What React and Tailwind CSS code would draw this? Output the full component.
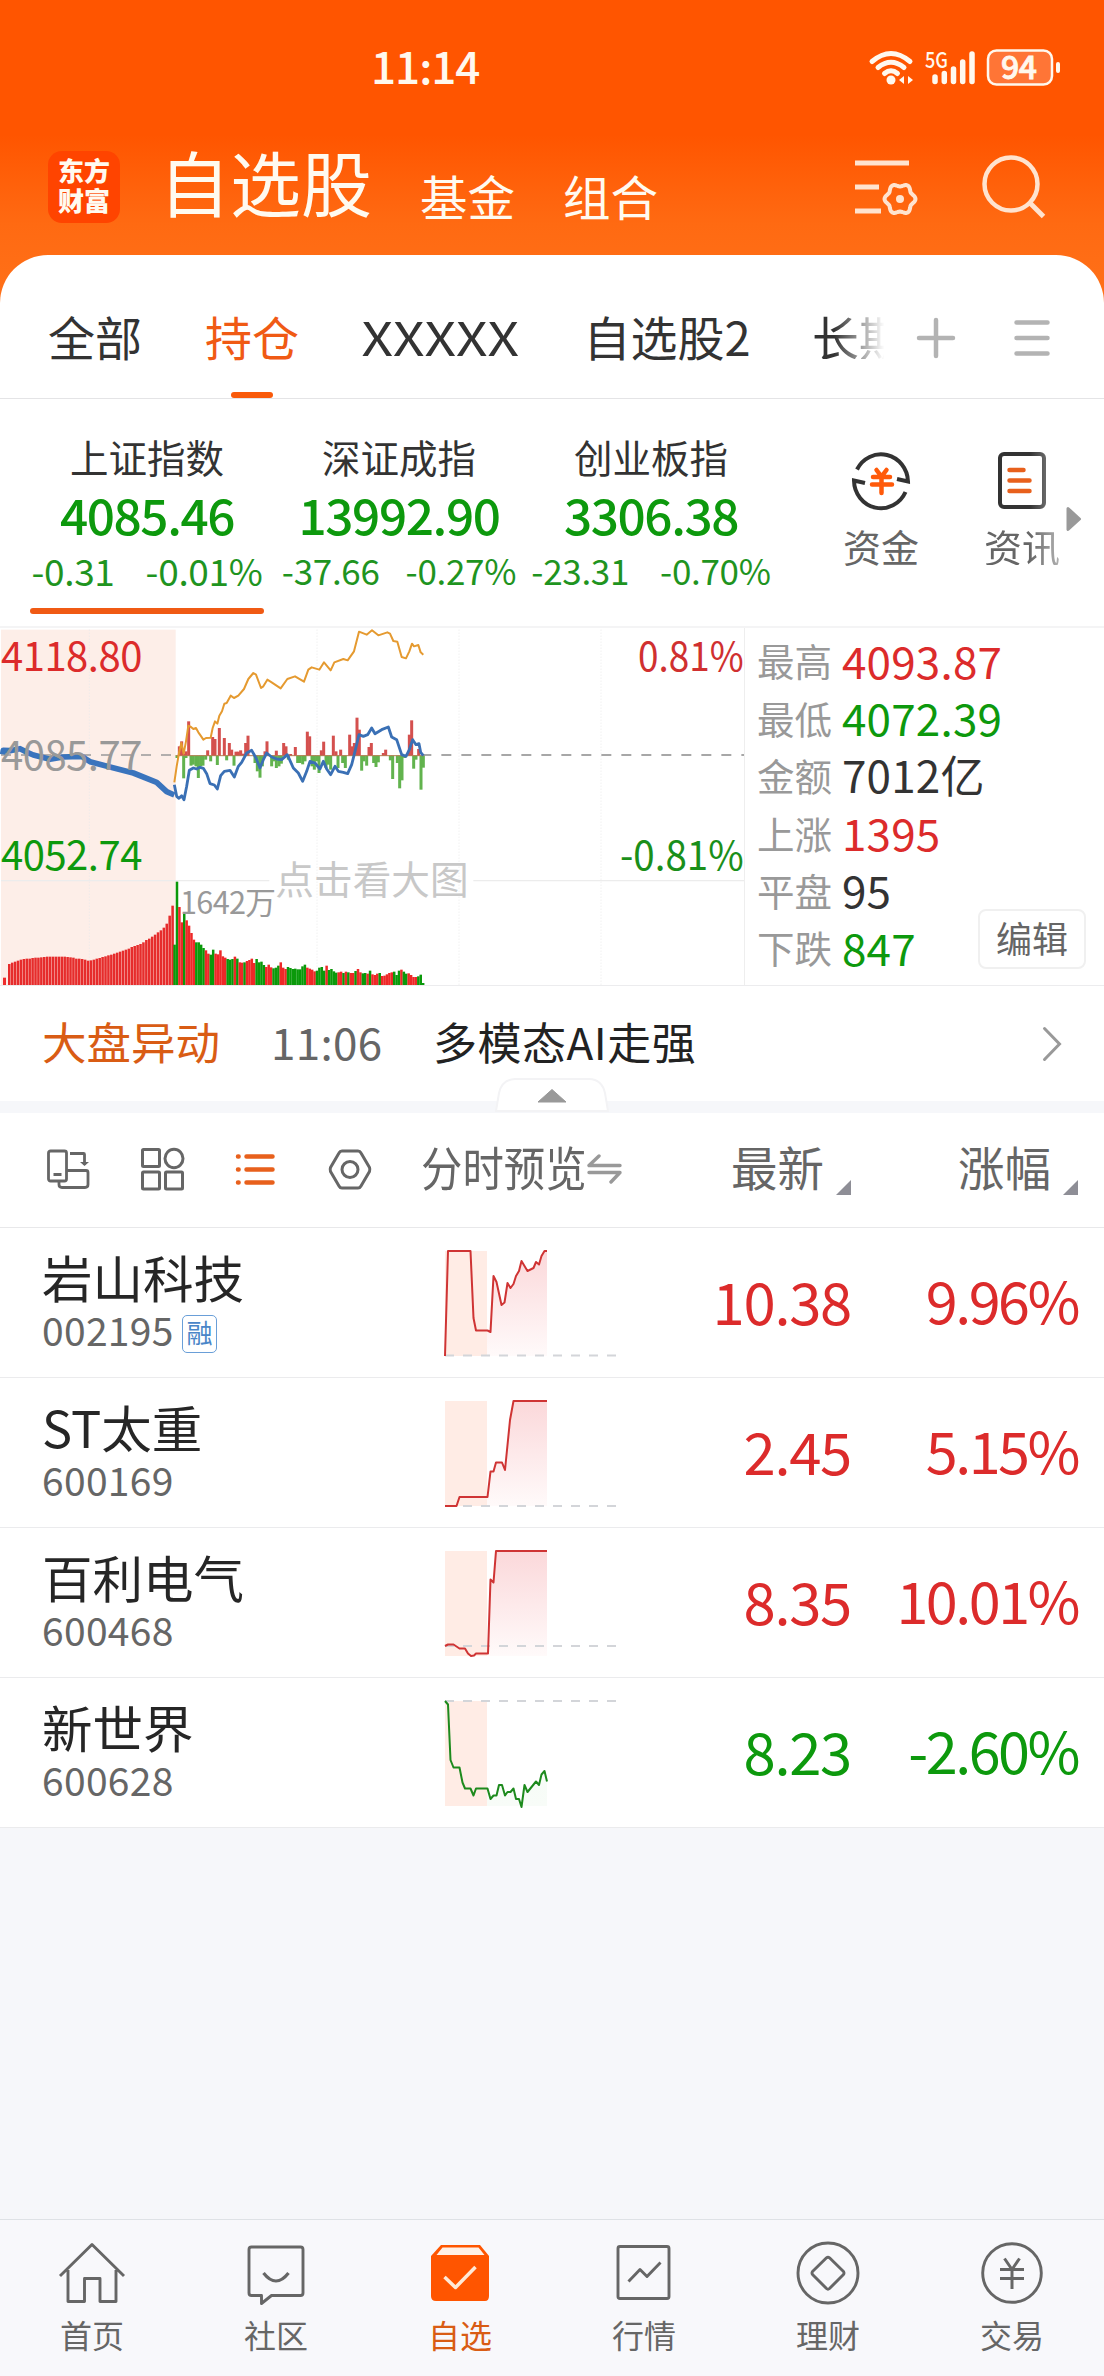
import React from 'react';
import clsx from 'clsx';

const tabs = [
  { label: '全部', box: 'w-[94px] ml-[48px]' },
  { label: '持仓', box: 'w-[94px] ml-[63px]', active: true },
  { label: 'XXXXX', box: 'w-[160px] ml-[61px]', text: 'inline-block scale-x-[1.17]' },
  { label: '自选股2', box: 'w-[168px] ml-[63px]' },
];

const indices = [
  { name: '上证指数', value: '4085.46', diff: '-0.31', pct: '-0.01%', gap: 'gap-[31px] text-[37px]', active: true },
  { name: '深证成指', value: '13992.90', diff: '-37.66', pct: '-0.27%', gap: 'gap-[26px] text-[35px]' },
  { name: '创业板指', value: '3306.38', diff: '-23.31', pct: '-0.70%', gap: 'gap-[31px] text-[35px]' },
];

const stats = [
  { label: '最高', value: '4093.87', color: 'text-[#dc2b2b]' },
  { label: '最低', value: '4072.39', color: 'text-[#0d990d]' },
  { label: '金额', value: '7012亿', color: 'text-[#333333]' },
  { label: '上涨', value: '1395', color: 'text-[#dc2b2b]' },
  { label: '平盘', value: '95', color: 'text-[#333333]' },
  { label: '下跌', value: '847', color: 'text-[#0d990d]' },
];

const stocks = [
  {
    name: '岩山科技',
    code: '002195',
    margin: true,
    price: '10.38',
    pct: '9.96%',
    base: 127.5,
    line: '0,128 3,23 25.5,23 28.5,90 31,102.5 42.5,102.5 45.5,104 48.5,48 51.5,54 56.5,77 59.5,74.5 62.5,55 65.5,60 68.5,56 71,48 74,43 76.5,33 79.5,38 82.5,43 88.5,40 91,34 94,36.5 96.5,28 99.5,23 102,23',
  },
  {
    name: 'ST太重',
    code: '600169',
    price: '2.45',
    pct: '5.15%',
    base: 128,
    line: '0,128 11.5,128 14.5,119 42.5,119 45.5,93.5 48.5,93.5 51,84.5 57,84.5 60,92 65,42 68.5,23 102,23',
  },
  {
    name: '百利电气',
    code: '600468',
    price: '8.35',
    pct: '10.01%',
    base: 118,
    line: '0,118 3,116.5 8.5,116.5 14.5,120.5 20,120.5 23,125.5 26,128 29,127.5 31,125.5 43,125.5 45.5,51.5 48.5,54.5 51,23 102,23',
  },
  {
    name: '新世界',
    code: '600628',
    price: '8.23',
    pct: '-2.60%',
    down: true,
    base: 23,
    line: '0,23 3,26.5 5.5,82 8.5,89.5 14.5,89.5 17.5,104.5 20,110.5 25.5,110.5 28.5,117.5 31,110.5 42.5,110.5 45.5,121 48.5,117.5 51.5,117.5 54,107 57,107 60,117.5 62.5,114 65.5,114 68.5,110.5 71,121 74,121 76.5,129 79.5,107 82.5,114 91,103.5 94,107 96.5,96.5 99.5,93 102,103.5',
  },
];

// Index chart data, three units to a pixel
const avgLine = '523,488 530,440 537,400 544,370 551,402 558,365 565,318 573,322 580,328 588,325 595,338 602,348 610,360 618,355 632,354 638,325 645,305 652,312 658,288 666,275 673,252 680,250 692,228 702,235 715,228 732,208 745,178 760,160 768,165 783,205 790,200 802,180 815,188 842,206 862,178 885,170 912,186 925,150 935,143 958,150 972,128 992,152 1003,128 1030,118 1043,122 1062,95 1077,36 1100,45 1116,32 1135,47 1162,38 1170,42 1180,64 1192,66 1205,112 1218,116 1228,95 1236,72 1242,80 1255,76 1262,98 1270,105';
const preLine = '8,404 10,392 30,393 60,387 75,395 100,406 150,419 190,412 245,410 270,426 330,442 400,460 470,488 500,516 523,526';
const priceLine = '523,495 530,530 537,536 545,528 552,540 560,500 568,452 580,445 590,448 600,443 610,446 620,462 630,492 643,496 652,508 662,468 673,455 690,452 703,472 715,440 725,428 740,400 755,392 768,415 780,445 790,420 800,400 815,412 830,418 845,420 862,405 880,445 895,460 908,485 920,455 930,425 945,430 960,448 970,425 980,448 992,465 1005,440 1015,455 1030,458 1043,462 1055,435 1065,395 1077,345 1090,350 1103,345 1115,325 1125,342 1145,330 1165,322 1175,352 1190,360 1205,405 1218,410 1228,390 1238,360 1248,375 1257,372 1262,398 1270,408';

const upBars = [
  [538, 380], [545, 365], [552, 402], [558, 395], [566, 305], [623, 392], [638, 352], [645, 358], [658, 325],
  [673, 355], [688, 370], [695, 390], [708, 396], [715, 396], [722, 392], [730, 402], [737, 370], [744, 348],
  [795, 395], [801, 365], [829, 393], [851, 370], [858, 380], [872, 403], [886, 382], [922, 336], [929, 350],
  [964, 392], [971, 366], [1000, 348], [1008, 395], [1022, 390], [1049, 345], [1056, 380], [1063, 370],
  [1071, 294], [1078, 330], [1107, 382], [1114, 370], [1150, 400], [1157, 390], [1228, 345], [1235, 302], [1256, 388],
];
const downBars = [
  [531, 415], [551, 476], [558, 415], [573, 438], [580, 435], [588, 440], [595, 475], [602, 440], [609, 438],
  [617, 420], [632, 425], [652, 436], [680, 422], [702, 438], [765, 430], [772, 455], [780, 474], [787, 440],
  [815, 440], [822, 425], [829, 445], [837, 440], [844, 432], [865, 420], [893, 430], [900, 430], [908, 434],
  [915, 425], [936, 440], [943, 450], [950, 425], [957, 460], [978, 445], [985, 435], [992, 450], [1014, 445],
  [1028, 430], [1036, 445], [1085, 453], [1092, 425], [1100, 438], [1121, 430], [1128, 442], [1135, 428],
  [1171, 422], [1178, 478], [1192, 430], [1199, 506], [1206, 482], [1214, 415], [1241, 447], [1248, 420],
  [1263, 510], [1270, 444],
];

const preVolume = [
  1033, 1029, 1026, 1023, 1020, 1018, 1017, 1017, 1015, 1014, 1014, 1013, 1012, 1011, 1011, 1011, 1011, 1011,
  1011, 1011, 1012, 1013, 1014, 1017, 1017, 1018, 1020, 1023, 1022, 1020, 1017, 1015, 1012, 1010, 1007, 1005,
  1002, 999, 996, 993, 990, 987, 982, 979, 976, 973, 968, 961, 957, 951, 945, 938, 932, 924, 912, 888, 858,
];
const volume = [
  975, 786, 862, 908, 882, 902, 918, 940, 960, 968, 968, 975, 985, 992, 1002, 1005, 990, 1002, 1004, 992, 1010,
  1014, 1018, 1020, 1018, 1011, 1017, 1028, 1029, 1028, 1024, 1021, 1017, 1030, 1018, 1028, 1026, 1036, 1042,
  1035, 1043, 1046, 1044, 1038, 1028, 1044, 1048, 1042, 1045, 1048, 1047, 1049, 1049, 1040, 1035, 1044, 1047,
  1050, 1055, 1053, 1044, 1042, 1053, 1038, 1051, 1048, 1055, 1059, 1058, 1056, 1060, 1056, 1058, 1060, 1060,
  1054, 1048, 1058, 1061, 1060, 1062, 1053, 1064, 1066, 1062, 1060, 1069, 1068, 1064, 1060, 1058, 1056, 1066,
  1053, 1050, 1056, 1062, 1061, 1066, 1072, 1072, 1070, 1065, 1090,
];
const volumeColors =
  'ggrrgrrrrggggrrggrrrrrgggrgrrgrrrrggggrrrgggrrrggggggggrrrrggggrggggrrgrgrrgrrggrgrrrgrrrrrgggrggrrrrgggggg';

// Six-lobed gear outline around 900,199
const gearPoints = Array.from({ length: 72 }, (_, i) => {
  const a = (i * Math.PI) / 36;
  const r = 14 + 1.5 * Math.cos(6 * a);
  return `${(900 + r * Math.cos(a)).toFixed(1)},${(199 + r * Math.sin(a)).toFixed(1)}`;
}).join(' ');

const StatusIcons = () => (
  <svg width="196" height="40" viewBox="868 48 196 40" className="ml-auto mr-[40px] overflow-visible" fill="none">
    <g stroke="#fff8ee" strokeWidth="5" strokeLinecap="round">
      <path d="M872 61.5Q891 45.500 910 61.500" />
      <path d="M878 67.500Q891 57 904 67.500" />
      <path d="M884.500 73.500Q891 68 897.500 73.500" />
    </g>
    <circle cx="891" cy="80" r="4.500" fill="#fff8ee" />
    <path d="M904 76v8l-5-4zM908 76v8l5-4z" fill="#fff8ee" />
    <text x="925" y="68" fontSize="22" fontWeight="500" textLength="23" lengthAdjust="spacingAndGlyphs" fill="#fff8ee" fontFamily="Noto Sans CJK SC, sans-serif">5G</text>
    <g stroke="#fff8ee" strokeWidth="5.500" strokeLinecap="round">
      <path d="M935 77v4.500M944.300 73.500v8M953.500 69v12.500M962.700 62v19.500M972 54v27.500" />
    </g>
    <rect x="988" y="50.500" width="64" height="34" rx="8.500" fill="#ff7536" stroke="#fff8ee" strokeWidth="2.500" />
    <rect x="1056" y="62" width="4" height="11" rx="2" fill="#fff8ee" />
    <text x="1001" y="79" fontSize="32" fontWeight="500" textLength="36" fill="#fff8ee" stroke="#fff8ee" strokeWidth="0.8" fontFamily="Noto Sans CJK SC, sans-serif">94</text>
  </svg>
);

const Header = () => (
  <header className="h-[308px] bg-linear-to-b from-[#ff5500] from-[135px] via-[#ff6a12] via-[225px] to-[#ff7119]">
    <div className="flex h-[136px] items-start pt-[48px] text-[#fff8ee]">
      <span className="ml-[371px] -mt-[5px] text-[44px] leading-none font-medium tracking-[-1px]">11:14</span>
      <StatusIcons />
    </div>
    <div className="flex items-start text-[#fffaf0]">
      <div className="ml-[48px] mt-[15px] flex size-[72px] flex-col items-center justify-center rounded-[14px] bg-[#ff4400] text-[26px] leading-[30px] font-black">
        <span className="-mt-[4px]">东方</span>
        <span>财富</span>
      </div>
      <span className="ml-[39px] mt-[9px] w-[213px] text-[71px] leading-none">自选股</span>
      <span className="ml-[48px] mt-[36px] text-[47.500px] leading-none">基金</span>
      <span className="ml-[48px] mt-[36px] text-[47.500px] leading-none">组合</span>
      <svg width="64" height="58" viewBox="855 159 64 58" className="ml-auto mt-[23px]" fill="none" stroke="#ffe3cf" strokeWidth="5">
        <path d="M855 163h54M855 187h24M855 211h26" />
        <polygon points={gearPoints} strokeWidth="4" strokeLinejoin="round" />
        <circle cx="900" cy="199" r="4" fill="#ffe3cf" stroke="none" />
      </svg>
      <svg width="66" height="66" viewBox="981 154 66 66" className="ml-[62px] mr-[57px] mt-[18px]" fill="none" stroke="#ffe3cf" strokeWidth="4.500">
        <circle cx="1011" cy="184" r="26.500" />
        <path d="M1030 203l13.500 13.500" strokeWidth="5" />
      </svg>
    </div>
  </header>
);

const TabBar = () => (
  <div className="flex h-[144px] items-start overflow-hidden border-b border-[#e4e4e6] text-[47px] leading-none text-[#333333]">
    {tabs.map(tab => (
      <div key={tab.label} className={clsx('flex h-full shrink-0 flex-col items-center pt-[57px]', tab.box)}>
        <span className={clsx('whitespace-nowrap', tab.text, tab.active && 'text-[#f05a14]')}>{tab.label}</span>
        {tab.active && <i className="mt-auto h-[6px] w-[42px] rounded-full bg-[#f95a0a]" />}
      </div>
    ))}
    <span className="ml-[61px] mt-[57px] w-[74px] shrink-0 overflow-hidden whitespace-nowrap [mask-image:linear-gradient(90deg,#000_30%,transparent_98%)]">长期</span>
    <svg width="40" height="42" viewBox="0 0 40 42" className="ml-[30px] mt-[62px]" stroke="#b3b3b3" strokeWidth="4.500" strokeLinecap="round">
      <path d="M3 21h34M20 3v36" />
    </svg>
    <svg width="36" height="40" viewBox="0 0 36 40" className="ml-[58px] mt-[63px]" stroke="#b3b3b3" strokeWidth="4.500" strokeLinecap="round">
      <path d="M2.500 4.500h31M2.500 20h31M2.500 35.500h31" />
    </svg>
  </div>
);

const IndexStrip = () => (
  <div className="flex h-[229px] items-start border-b-2 border-[#f4f4f5] pl-[21px] leading-none">
    {indices.map(item => (
      <div key={item.name} className="flex w-[252px] flex-col items-center pt-[38px]">
        <span className="text-[38.500px] leading-none text-[#333333]">{item.name}</span>
        <span className="mt-[13px] text-[49.500px] leading-none font-medium tracking-[-1.400px] text-[#0d990d]">{item.value}</span>
        <div className={clsx('mt-[14px] flex h-[37px] justify-center leading-none whitespace-nowrap tracking-[-0.300px] text-[#1f941f]', item.gap)}>
          <span>{item.diff}</span>
          <span>{item.pct}</span>
        </div>
        {item.active && <i className="mt-[19px] h-[6px] w-[234px] rounded-full bg-[#f05a14]" />}
      </div>
    ))}
    <div className="ml-[66px] flex flex-col items-center pt-[51px]">
      <svg width="60" height="60" viewBox="0 0 60 60" fill="none" stroke="#333" strokeWidth="4" className="overflow-visible">
        <path d="M6 19.500A27 28 0 0 1 57 31.500L46 29" />
        <path d="M54.500 42A27 28 0 0 1 3 30.500L14 33" />
        <path d="M25.500 20l5 6.500l5-6.500M22 27h17M21 34.500h20M30.500 27v16" stroke="#ff5a0a" strokeWidth="4.500" strokeLinecap="round" />
      </svg>
      <span className="mt-[17px] text-[38px] text-[#666666]">资金</span>
    </div>
    <div className="ml-[65px] flex flex-col items-center pt-[51px] [mask-image:linear-gradient(90deg,#000_60%,rgba(0,0,0,.5)_100%)]">
      <svg width="50" height="60" viewBox="0 0 50 60" fill="none" stroke="#333" strokeWidth="4">
        <rect x="3" y="4" width="44" height="53" rx="4" />
        <path d="M12.500 20h14M12.500 30.500h20M12.500 41h20" stroke="#e8601c" strokeWidth="4.500" strokeLinecap="round" />
      </svg>
      <span className="mt-[17px] text-[38px] text-[#666666]">资讯</span>
    </div>
    <svg width="17" height="26" viewBox="0 0 17 26" className="ml-[5px] mt-[107px]">
      <path d="M3 2.500l11.500 10.500L3 23.500z" fill="#999" stroke="#999" strokeWidth="3" strokeLinejoin="round" />
    </svg>
  </div>
);

const IndexChart = () => (
  <svg width="744" height="357" viewBox="0 25 2232 1071" fill="none" fontFamily="Noto Sans CJK SC, sans-serif" className="shrink-0">
    <rect x="3" y="30" width="524" height="1068" fill="#fdeee8" />
    <g stroke="#e9e9e9" strokeWidth="3" strokeDasharray="3 6">
      <path d="M268 30V1098M951 30V1098M1377 30V1098M1803 30V1098" />
    </g>
    <path d="M3 783H808M1420 783H2232" stroke="#ececec" strokeWidth="4" />

    {preVolume.map((top, i) => (
      <rect key={i} x={24 + i * 8.75} y={top} width="7.600" height={1098 - top} fill="#e62c2c" />
    ))}
    <rect x="9" y="1074" width="9" height="24" fill="#ee2d2d" />
    {volume.map((top, i) => (
      <rect key={i} x={520 + i * 7.24} y={top} width="7.500" height={1098 - top} fill={volumeColors[i] === 'g' ? '#0a990a' : '#ee2828'} />
    ))}

    {downBars.map(([x, y]) => (
      <rect key={x} x={x - 4.5} y="407" width="9" height={y - 407} fill="#62b34e" />
    ))}
    {upBars.map(([x, y]) => (
      <rect key={x} x={x - 4.5} y={y} width="9" height={409 - y} fill="#d4504e" />
    ))}
    <path d="M527 408H1272" stroke="#b58055" strokeWidth="3" />
    <path d="M3 406H527" stroke="#999" strokeWidth="5" strokeDasharray="30 30" />
    <path d="M1272 406H2232" stroke="#8a8a8a" strokeWidth="5" strokeDasharray="30 30" strokeDashoffset="8" />

    <polyline points={preLine} stroke="#3a74bd" strokeWidth="17" strokeLinejoin="round" />
    <polyline points={avgLine} stroke="#e59a30" strokeWidth="6" strokeLinejoin="round" />
    <polyline points={priceLine} stroke="#3a70b5" strokeWidth="8.500" strokeLinejoin="round" />

    <g fontSize="120">
      <text x="3" y="153" textLength="424" fill="#dc2b2b">4118.80</text>
      <text x="3" y="450" textLength="424" fill="#999999">4085.77</text>
      <text x="3" y="750" textLength="424" fill="#0d990d">4052.74</text>
      <text x="2231" y="153" textAnchor="end" textLength="317" lengthAdjust="spacingAndGlyphs" fill="#d03030">0.81%</text>
      <text x="2231" y="750" textAnchor="end" textLength="371" lengthAdjust="spacingAndGlyphs" fill="#1a8f1a">-0.81%</text>
    </g>
    <text x="540" y="882" fontSize="92" textLength="288" fill="#999999">1642万</text>
    <text x="826" y="822" fontSize="116" textLength="580" fill="#c8c8c8">点击看大图</text>
  </svg>
);

const ChartPanel = () => (
  <div className="flex h-[358px] border-b border-[#ececee]">
    <IndexChart />
    <div className="relative flex flex-1 flex-col border-l border-[#eeeeee] pl-[12px] pt-[5px]">
      {stats.map(item => (
        <div key={item.label} className="flex h-[57.400px] items-center leading-none">
          <span className="-mt-[3px] w-[85px] text-[37.500px] text-[#999999]">{item.label}</span>
          <span className={clsx('-mt-[4px] text-[44px] tracking-[0.200px]', item.color)}>{item.value}</span>
        </div>
      ))}
      <button className="absolute right-[18px] bottom-[16px] h-[60px] w-[108px] rounded-[8px] border-2 border-[#f0f0f0] bg-white pb-[4px] text-[36px] leading-none text-[#666666]">编辑</button>
    </div>
  </div>
);

const NewsRow = () => (
  <div className="relative border-b-12 border-[#f6f7fa]">
    <div className="flex h-[115px] items-start pt-[33px] text-[44px] leading-none">
      <span className="ml-[42px] text-[44.500px] text-[#d95c14]">大盘异动</span>
      <span className="ml-[51px] w-[113px] tracking-[0.300px] text-[#666666]">11:06</span>
      <span className="ml-[49px] tracking-[0.500px] text-[#222222]">多模态AI走强</span>
      <svg width="20" height="38" viewBox="0 0 20 38" className="ml-auto mr-[42px] mt-[6px]" fill="none" stroke="#999" strokeWidth="3">
        <path d="M2.500 3.500L17.500 19L2.500 34.500" strokeLinecap="round" />
      </svg>
    </div>
    <svg width="114" height="34" viewBox="0 0 114 34" className="absolute left-[495px] top-[92px]">
      <path d="M1 33L4 15Q7 1.500 20 1H94Q107 1.500 110 15L113 33z" fill="#fff" stroke="#f3f3f5" strokeWidth="2" />
      <path d="M57 11.500L71 24H43z" fill="#999" stroke="#999" strokeLinejoin="round" />
    </svg>
  </div>
);

const SortMark = () => (
  <svg width="15" height="15" viewBox="0 0 15 15" className="mt-[67px]">
    <path d="M15 0V15H0z" fill="#8e8e96" />
  </svg>
);

const Toolbar = () => (
  <div className="flex h-[115px] items-start border-b border-[#e8e8ea] text-[46.500px] leading-none text-[#666666]">
    <div className="flex w-[421px] gap-[50.500px] pl-[46px] pt-[34px]">
      <svg width="44" height="44" viewBox="0 0 44 44" fill="none" stroke="#666" strokeWidth="2.800">
        <rect x="2.500" y="4" width="18" height="30" rx="2" />
        <path d="M7.500 27.500h8M24 6.500h13.500q1 0 1 1V18M21 23.500h19q2 0 2 2V37.500q0 3-3 3H16q-3 0-3-3V34" />
        <path d="M34 15h9l-4.500 4z" fill="#666" stroke="none" />
      </svg>
      <svg width="44" height="44" viewBox="0 0 44 44" fill="none" stroke="#666" strokeWidth="3">
        <rect x="1.500" y="2.500" width="17" height="17" rx="1" />
        <ellipse cx="33" cy="11.500" rx="9" ry="9.200" />
        <rect x="1.500" y="25" width="17" height="17" rx="1" />
        <rect x="24.500" y="25" width="17" height="17" rx="1" />
      </svg>
      <svg width="44" height="44" viewBox="0 0 44 44" stroke="#e8601c" strokeWidth="4.500" strokeLinecap="round">
        <path d="M3 9.500h.6M11.500 9.500h26M3 22.500h.6M11.500 22.500h26M3 35.500h.6M11.500 35.500h26" />
      </svg>
      <svg width="44" height="44" viewBox="0 0 44 44" fill="none" stroke="#666" strokeWidth="3" strokeLinejoin="round" className="-ml-[2px]">
        <path d="M14 4H30Q32 4 33 6L41.500 20.500Q42.200 22.500 41.500 24.500L33 39Q32 41 30 41H14Q12 41 11 39L2.500 24.500Q1.800 22.500 2.500 20.500L11 6Q12 4 14 4z" />
        <circle cx="22" cy="22.500" r="8" />
      </svg>
    </div>
    <div className="flex w-[310px]">
      <span className="mt-[30px] inline-block w-[166px] origin-left scale-x-[.89] whitespace-nowrap">分时预览</span>
      <svg width="36" height="34" viewBox="0 0 36 34" className="mt-[39px]" fill="none" stroke="#999" strokeWidth="3.400" strokeLinecap="round" strokeLinejoin="round">
        <path d="M12 4L2 13.500H33M2 20.500H33L24 30" />
      </svg>
    </div>
    <span className="mt-[30px] w-[105px]">最新</span>
    <SortMark />
    <span className="ml-[107px] mt-[30px] w-[105px]">涨幅</span>
    <SortMark />
  </div>
);

const Sparkline = ({ line, base, down, id }) => (
  <svg width="176" height="140" viewBox="-2 0 176 140" className="absolute left-[443px] top-0" fill="none">
    <defs>
      <linearGradient id={id} x1="0" y1="0" x2="0" y2="1">
        <stop offset="0" stopColor={down ? '#f4fbf4' : '#fbd8da'} />
        <stop offset="1" stopColor={down ? '#f8fcf8' : '#fffafa'} />
      </linearGradient>
    </defs>
    <polygon points={down ? `42,110 ${line} 102,128 42,128` : `0,128 ${line} 102,128`} fill={`url(#${id})`} />
    <rect x="0" y="23" width="42" height="105" fill="#ffece5" />
    <path d={`M0 ${base}H172`} stroke="#d3d5d9" strokeWidth="2" strokeDasharray="9 9" />
    <polyline points={line} stroke={down ? '#1d8a1d' : '#cf3434'} strokeWidth="2" strokeLinejoin="round" />
  </svg>
);

const StockRow = ({ stock }) => (
  <div className="relative flex h-[150px] items-start border-b border-[#ebebed] bg-white leading-none">
    <div className="ml-[42px] w-[558px] pt-[23px]">
      <div className="text-[50.500px] leading-none text-[#262626]">{stock.name}</div>
      <div className="mt-[8px] flex items-start text-[39px] leading-none text-[#666666]">
        <span className="w-[131px] tracking-[0.300px]">{stock.code}</span>
        {stock.margin && (
          <span className="ml-[9px] mt-[5px] flex h-[38px] w-[35px] items-center justify-center rounded-[5px] border border-[#6a9fd8] pb-[3px] text-[26px] text-[#4a86c8]">融</span>
        )}
      </div>
    </div>
    <Sparkline line={stock.line} base={stock.base} down={stock.down} id={`fill-${stock.code}`} />
    <span className={clsx('mt-[43px] w-[251px] text-right text-[58px] tracking-[-1.300px]', stock.down ? 'text-[#0d990d]' : 'text-[#dc2b2b]')}>{stock.price}</span>
    <span className={clsx('mt-[43px] w-[227px] text-right text-[57.500px] tracking-[-2.500px]', stock.down ? 'text-[#0d990d]' : 'text-[#dc2b2b]')}>{stock.pct}</span>
  </div>
);

const navItems = [
  {
    label: '首页',
    icon: <path d="M2 33L34 1.500L66 33M10 27V58.500H26.500V35.500H42V58.500H58V27" />,
  },
  {
    label: '社区',
    icon: (
      <>
        <path d="M9.500 4H58.500Q61 4 61 6.500V50Q61 52.500 58.500 52.500H29.500L19.500 60.500V52.500H9.500Q7 52.500 7 50V6.500Q7 4 9.500 4z" />
        <path d="M21.500 30Q34 46 46.500 30" strokeWidth="3.200" />
      </>
    ),
  },
  {
    label: '自选',
    active: true,
    icon: (
      <>
        <path d="M5 13L15 2H54L63 13V53Q63 58 59 58H10Q5 58 5 53z" fill="#ff5500" stroke="none" />
        <path d="M16.500 4.500H52.500L58.500 12H10.500z" fill="#fff1e6" stroke="none" />
        <path d="M18.500 34L29.500 44.500L49.500 24" stroke="#ffe9d6" strokeWidth="3.500" />
      </>
    ),
  },
  {
    label: '行情',
    icon: (
      <>
        <rect x="8" y="3.500" width="51" height="52" rx="2" />
        <path d="M18.500 38.500L30 26.500L37 33.500L50.500 19.500" />
      </>
    ),
  },
  {
    label: '理财',
    icon: (
      <>
        <circle cx="34" cy="30" r="30" />
        <path d="M32.500 14.800Q34 13.500 35.500 14.800L49.500 28.500Q50.500 30 49.500 31.500L35.500 45.500Q34 46.800 32.500 45.500L18.500 31.500Q17.500 30 18.500 28.500z" />
      </>
    ),
  },
  {
    label: '交易',
    icon: (
      <>
        <circle cx="34" cy="30" r="29.300" />
        <path d="M26.500 15.500L34 26.500L41.500 15.500M22 26.500H46M22 35.500H46M34 26.500V46" strokeWidth="3" />
      </>
    ),
  },
];

const BottomNav = () => (
  <nav className="grid h-[157px] grid-cols-6 border-t border-[#dfe2e6] bg-[#f8f8fb]">
    {navItems.map(item => (
      <div key={item.label} className="flex flex-col items-center pt-[20px]">
        <svg width="70" height="66" viewBox="-1 -3 70 66" fill="none" stroke="#666" strokeWidth="2.900" strokeLinejoin="round">
          {item.icon}
        </svg>
        <span className={clsx('mt-[12px] text-[32px] leading-none', item.active ? 'text-[#d95c14]' : 'text-[#666666]')}>{item.label}</span>
      </div>
    ))}
  </nav>
);

export default function App() {
  return (
    <div className="flex h-[2376px] w-[1104px] flex-col overflow-hidden bg-[#f6f7fa] font-['Noto_Sans_CJK_SC',sans-serif]">
      <Header />
      <main className="-mt-[53px] rounded-t-[48px] bg-white">
        <TabBar />
        <IndexStrip />
        <ChartPanel />
        <NewsRow />
        <Toolbar />
        {stocks.map(stock => (
          <StockRow key={stock.code} stock={stock} />
        ))}
      </main>
      <div className="flex-1" />
      <BottomNav />
    </div>
  );
}
